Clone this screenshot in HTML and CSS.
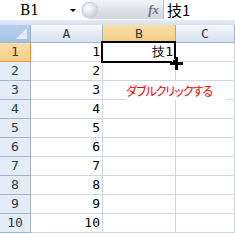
FILE: index.html
```html
<!DOCTYPE html>
<html lang="ja">
<head>
<meta charset="utf-8">
<link rel="stylesheet" href="styles.css">
</head>
<body>
<div class="app">
  <div class="toolbar">
    <div class="namebox"><span class="ref">B1</span><span class="arrow"></span></div>
    <div class="pill"><span class="knob"></span><span class="fx">fx</span></div>
    <div class="formula">技1</div>
  </div>
  <div class="band"></div>
  <div class="sheet">
    <div class="grid">
      <div class="corner"><span class="tri"></span></div>
      <div class="colh">A</div>
      <div class="colh sel">B</div>
      <div class="colh">C</div>

      <div class="rowh sel">1</div><div class="cell num">1</div><div class="cell num">技1</div><div class="cell"></div>
      <div class="rowh">2</div><div class="cell num">2</div><div class="cell"></div><div class="cell"></div>
      <div class="rowh">3</div><div class="cell num">3</div><div class="cell"></div><div class="cell"></div>
      <div class="rowh">4</div><div class="cell num">4</div><div class="cell"></div><div class="cell"></div>
      <div class="rowh">5</div><div class="cell num">5</div><div class="cell"></div><div class="cell"></div>
      <div class="rowh">6</div><div class="cell num">6</div><div class="cell"></div><div class="cell"></div>
      <div class="rowh">7</div><div class="cell num">7</div><div class="cell"></div><div class="cell"></div>
      <div class="rowh">8</div><div class="cell num">8</div><div class="cell"></div><div class="cell"></div>
      <div class="rowh">9</div><div class="cell num">9</div><div class="cell"></div><div class="cell"></div>
      <div class="rowh">10</div><div class="cell num">10</div><div class="cell"></div><div class="cell"></div>
    </div>
    <div class="selection"></div>
    <div class="handle"></div>
    <svg class="cursor" width="13" height="13" viewBox="0 0 13 13">
      <rect x="5" y="0" width="3" height="13" fill="#000"/>
      <rect x="0" y="5" width="13" height="3" fill="#000"/>
    </svg>
    <div class="note">ダブルクリックする</div>
  </div>
</div>
</body>
</html>
```
FILE: styles.css
```css
html, body {
  margin: 0;
  padding: 0;
  background: #fff;
}
.app {
  width: 235px;
  height: 234px;
  overflow: hidden;
  font-family: "Noto Sans CJK JP", "DejaVu Sans", sans-serif;
}
.toolbar {
  display: flex;
  height: 20px;
  background: #fff;
}
.namebox {
  width: 81px;
  display: flex;
  align-items: center;
}
.ref {
  font-family: "DejaVu Serif", serif;
  font-size: 14px;
  margin-left: 20px;
  line-height: 20px;
  color: #000;
}
.arrow {
  margin-left: 31px;
  width: 0;
  height: 0;
  border-left: 3px solid transparent;
  border-right: 3px solid transparent;
  border-top: 3px solid #000;
}
.pill {
  width: 83px;
  height: 19px;
  border-radius: 10px 0 0 10px;
  background: linear-gradient(#f2f4f7, #dfe3e9 50%, #cfd5de);
  border-right: 1px solid #b7c2d0;
  display: flex;
  align-items: center;
  justify-content: space-between;
  box-sizing: border-box;
}
.knob {
  width: 14px;
  height: 14px;
  margin-left: 2px;
  border-radius: 50%;
  background: radial-gradient(circle at 35% 35%, #ffffff, #d8dde4 60%, #a9b2bf);
  box-shadow: 0 0 0 1px #c3cad4;
}
.fx {
  font-family: "Liberation Serif", serif;
  font-style: italic;
  font-weight: bold;
  font-size: 13px;
  color: #6d7786;
  margin-right: 4px;
}
.formula {
  flex: 1;
  font-size: 15px;
  line-height: 19px;
  padding-left: 3px;
  color: #000;
  overflow: hidden;
}
.band {
  height: 5px;
  background: linear-gradient(#e6edf7, #d5e0ef);
}
.sheet {
  position: relative;
}
.grid {
  display: grid;
  grid-template-columns: 31px 72px 73px 59px;
  grid-template-rows: 18px repeat(10, 19px);
}
.corner {
  background: linear-gradient(#b8cfee, #a6c0e6);
  border-right: 1px solid #9eb6ce;
  border-bottom: 1px solid #9eb6ce;
  box-sizing: border-box;
  position: relative;
}
.tri {
  position: absolute;
  right: 3px;
  bottom: 3px;
  width: 0;
  height: 0;
  border-left: 11px solid transparent;
  border-bottom: 11px solid #e3ebf7;
}
.colh {
  background: linear-gradient(#f4f7fb, #e4ebf5 50%, #d9e2ee);
  border-right: 1px solid #9eb6ce;
  border-bottom: 1px solid #9eb6ce;
  box-sizing: border-box;
  text-align: center;
  font-family: "DejaVu Sans Mono", monospace;
  font-size: 13px;
  line-height: 17px;
  color: #27413e;
}
.colh.sel {
  background: linear-gradient(#f9dfa8, #f6cd84);
  border-right: 1px solid #f29536;
  border-bottom: 1px solid #f29536;
}
.rowh {
  background: #e4ecf7;
  border-right: 1px solid #9eb6ce;
  border-bottom: 1px solid #9eb6ce;
  box-sizing: border-box;
  text-align: center;
  font-family: "DejaVu Sans Mono", monospace;
  font-size: 13px;
  line-height: 18px;
  color: #27413e;
}
.rowh.sel {
  background: linear-gradient(#f9dda2, #f7d08c);
  border-right: 1px solid #f29536;
  border-bottom: 1px solid #f29536;
}
.cell {
  border-right: 1px solid #d0d7e5;
  border-bottom: 1px solid #d0d7e5;
  box-sizing: border-box;
  font-family: "DejaVu Sans Mono", monospace;
  font-size: 13px;
  line-height: 18px;
  color: #000;
}
.cell.num {
  text-align: right;
  padding-right: 2px;
}
.selection {
  position: absolute;
  left: 101px;
  top: 16px;
  width: 75px;
  height: 22px;
  border: 2px solid #000;
  box-sizing: border-box;
}
.handle {
  position: absolute;
  left: 172px;
  top: 34px;
  width: 5px;
  height: 5px;
  background: #000;
  border: 1px solid #fff;
}
.cursor {
  position: absolute;
  left: 170px;
  top: 32px;
}
.note {
  position: absolute;
  left: 126px;
  top: 56px;
  width: 100px;
  height: 19px;
  background: #fff;
  color: #ff0000;
  font-size: 12px;
  line-height: 19px;
  font-feature-settings: "palt";
  letter-spacing: -1px;
}
```
